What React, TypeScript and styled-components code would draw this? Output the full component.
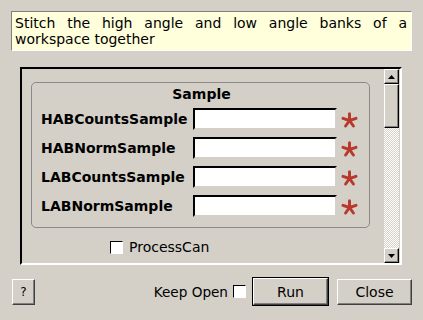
import React from "react";
import styled, { createGlobalStyle } from "styled-components";

const Global = createGlobalStyle`
  html, body { margin: 0; padding: 0; background: #d4d0c8; }
  body { font-family: "DejaVu Sans", "Liberation Sans", sans-serif; font-size: 14px; color: #000; }
  * { box-sizing: border-box; }
`;

const Dialog = styled.div`
  width: 423px;
  height: 320px;
  padding: 11px 11px 0 11px;
  display: flex;
  flex-direction: column;
`;

const Description = styled.div`
  width: 401px;
  height: 40px;
  background: #ffffdc;
  border-top: 1px solid #808080;
  border-left: 1px solid #808080;
  border-right: 1px solid #ffffff;
  border-bottom: 1px solid #ffffff;
  padding: 3px 4px 0 3px;
  line-height: 16px;
  text-align: justify;
`;

const ScrollFrame = styled.div`
  margin: 16px 0 0 9px;
  width: 382px;
  height: 198px;
  border-top: 2px solid #000;
  border-left: 2px solid #000;
  border-right: 2px solid #fff;
  border-bottom: 2px solid #fff;
  display: flex;
`;

const Content = styled.div`
  flex: 1;
  padding: 13px 14px 0 9px;
  display: flex;
  flex-direction: column;
`;

const GroupBox = styled.div`
  height: 146px;
  border: 1px solid #8a8a8a;
  border-radius: 5px;
  padding: 3px 9px 0 9px;
  display: flex;
  flex-direction: column;
`;

const GroupTitle = styled.div`
  font-weight: bold;
  text-align: center;
  line-height: 17px;
  height: 19px;
  padding-left: 2px;
`;

const Row = styled.div<{ $first?: boolean }>`
  display: grid;
  grid-template-columns: 152px 144px 1fr;
  align-items: center;
  height: 22px;
  margin-top: ${(p) => (p.$first ? 3 : 7)}px;
`;

const Label = styled.div`
  font-weight: bold;
  white-space: nowrap;
`;

const Input = styled.div`
  height: 22px;
  background: #fff;
  border-top: 2px solid #000;
  border-left: 2px solid #000;
  border-right: 2px solid #d4d0c8;
  border-bottom: 2px solid #d4d0c8;
  box-shadow: inset -1px -1px 0 #fff;
`;

const Star = styled.div`
  display: flex;
  justify-content: center;
  padding-left: 2px;
  padding-top: 2px;
`;

const CheckRow = styled.label`
  display: flex;
  align-items: center;
  gap: 6px;
  margin: 11px 0 0 79px;
  line-height: 16px;
`;

const Check = styled.span`
  display: inline-block;
  width: 13px;
  height: 13px;
  background: #fff;
  border-top: 1px solid #000;
  border-left: 1px solid #000;
  border-right: 1px solid #fff;
  border-bottom: 1px solid #fff;
  box-shadow: 1px 1px 0 #d4d0c8;
`;

const ScrollBar = styled.div`
  width: 16px;
  display: flex;
  flex-direction: column;
`;

const ArrowBtn = styled.div`
  width: 15px;
  height: 15px;
  background: #d4d0c8;
  border-top: 1px solid #fff;
  border-left: 1px solid #fff;
  border-right: 1px solid #000;
  border-bottom: 1px solid #000;
  box-shadow: inset -1px -1px 0 #808080;
  display: flex;
  align-items: center;
  justify-content: center;
`;

const Track = styled.div`
  flex: 1;
  width: 15px;
  background-color: #fff;
  background-image: repeating-conic-gradient(#d4d0c8 0 25%, #fff 0 50%);
  background-size: 2px 2px;
  display: flex;
  flex-direction: column;
`;

const Thumb = styled.div`
  height: 44px;
  background: #d4d0c8;
  border-top: 1px solid #fff;
  border-left: 1px solid #fff;
  border-right: 1px solid #000;
  border-bottom: 1px solid #000;
  box-shadow: inset -1px -1px 0 #808080;
`;

const Footer = styled.div`
  margin-top: 13px;
  display: flex;
  align-items: center;
  height: 27px;
`;

const Button = styled.div<{ $w: number; $default?: boolean }>`
  width: ${(p) => p.$w}px;
  height: ${(p) => (p.$default ? 27 : 26)}px;
  display: flex;
  align-items: center;
  justify-content: center;
  background: #d4d0c8;
  border-top: 1px solid #fff;
  border-left: 1px solid #fff;
  border-right: 1px solid #404040;
  border-bottom: 1px solid #404040;
  box-shadow: ${(p) =>
    p.$default ? "0 0 0 1px #000, inset -1px -1px 0 #808080" : "inset -1px -1px 0 #808080"};
`;

const HelpButton = styled(Button)`
  margin-left: 1px;
  font-size: 12px;
`;

const Spacer = styled.div<{ $w?: number }>`
  flex: ${(p) => (p.$w ? `0 0 ${p.$w}px` : "1")};
`;

const KeepOpen = styled.label`
  display: flex;
  align-items: center;
  gap: 5px;
  margin-right: 7px;
  font-size: 13.6px;
`;

const StarIcon = () => (
  <svg width="17" height="17" viewBox="0 0 17 17">
    <g stroke="#b8392b" strokeWidth="3" strokeLinecap="round">
      <line x1="8.5" y1="1.8" x2="8.5" y2="8.5" />
      <line x1="8.5" y1="8.5" x2="15" y2="6.4" />
      <line x1="8.5" y1="8.5" x2="12.4" y2="14" />
      <line x1="8.5" y1="8.5" x2="4.6" y2="14" />
      <line x1="8.5" y1="8.5" x2="2" y2="6.4" />
    </g>
  </svg>
);

const Tri = ({ up }: { up?: boolean }) => (
  <svg width="7" height="4" viewBox="0 0 7 4">
    <polygon points={up ? "3.5,0 7,4 0,4" : "0,0 7,0 3.5,4"} fill="#000" />
  </svg>
);

const fields = ["HABCountsSample", "HABNormSample", "LABCountsSample", "LABNormSample"];

export default function App() {
  return (
    <Dialog>
      <Global />
      <Description>Stitch the high angle and low angle banks of a workspace together</Description>
      <ScrollFrame>
        <Content>
          <GroupBox>
            <GroupTitle>Sample</GroupTitle>
            {fields.map((f, i) => (
              <Row key={f} $first={i === 0}>
                <Label>{f}</Label>
                <Input />
                <Star>
                  <StarIcon />
                </Star>
              </Row>
            ))}
          </GroupBox>
          <CheckRow>
            <Check />
            ProcessCan
          </CheckRow>
        </Content>
        <ScrollBar>
          <ArrowBtn>
            <Tri up />
          </ArrowBtn>
          <Track>
            <Thumb />
          </Track>
          <ArrowBtn>
            <Tri />
          </ArrowBtn>
        </ScrollBar>
      </ScrollFrame>
      <Footer>
        <HelpButton $w={23}>?</HelpButton>
        <Spacer />
        <KeepOpen>
          Keep Open
          <Check />
        </KeepOpen>
        <Button $w={75} $default>
          Run
        </Button>
        <Spacer $w={9} />
        <Button $w={75}>Close</Button>
      </Footer>
    </Dialog>
  );
}
